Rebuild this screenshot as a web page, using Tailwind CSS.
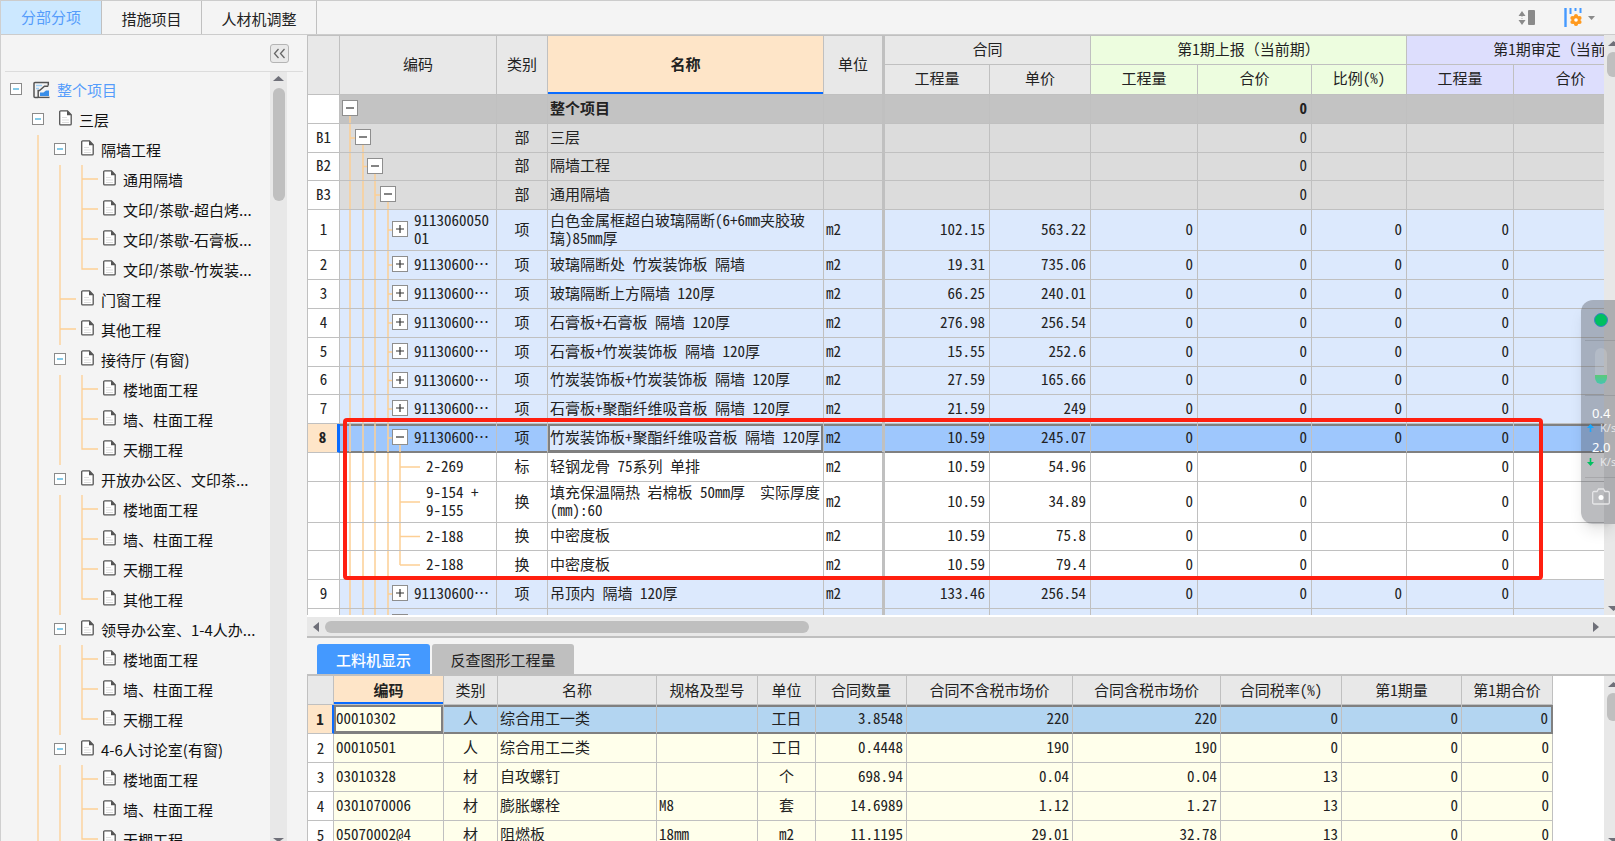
<!DOCTYPE html>
<html lang="zh-CN">
<head>
<meta charset="utf-8">
<title>分部分项</title>
<script src="https://cdn.jsdelivr.net/npm/@tailwindcss/browser@4"></script>
</head>
<body class="h-screen overflow-hidden bg-[#f4f4f4] font-['Noto_Sans_CJK_SC',sans-serif] text-[15px] text-[#222]">
<div class="flex h-full flex-col border-l border-[#cfcfcf]">

  <header class="flex h-[35px] shrink-0 items-stretch border-y border-[#cccccc]">
    <nav class="flex" aria-label="主标签">
      <button class="w-[101px] border-r border-[#c0c0c0] bg-[#cce8ff] text-[#559cfb]">分部分项</button>
      <button class="w-[100px] border-r border-[#c0c0c0] pt-[3px]">措施项目</button>
      <button class="w-[115px] border-r border-[#c0c0c0] pt-[3px]">人材机调整</button>
    </nav>
    <div class="ml-auto flex items-center pr-5">
      <button aria-label="行高" class="mr-7"><svg width="18" height="18" viewBox="0 0 18 18" fill="#8a8a8a"><path d="M4 2l3.500 5H.5zM4 16l3.500-5H.5z"/><path d="M4 7v4" stroke="#aaa" stroke-dasharray="1 1"/><rect x="10" y="1" width="7" height="15" rx="1"/></svg></button>
      <button aria-label="列设置" class="flex items-center gap-1.5"><svg width="18" height="20" viewBox="0 0 18 20"><path d="M1.500 0v19" stroke="#4499ff" stroke-width="2.400"/><path d="M6.500 0v6M11.500 0v3M16.500 0v5" stroke="#4499ff" stroke-width="2"/><g fill="#ff9a1f"><circle cx="12" cy="12" r="4.500"/><circle cx="12" cy="7.800" r="1.900"/><circle cx="12" cy="16.200" r="1.900"/><circle cx="8.300" cy="9.900" r="1.900"/><circle cx="15.700" cy="9.900" r="1.900"/><circle cx="8.300" cy="14.100" r="1.900"/><circle cx="15.700" cy="14.100" r="1.900"/></g><circle cx="12" cy="12" r="1.800" fill="#fff"/></svg><svg width="7" height="4" viewBox="0 0 7 4"><path d="M0 0h7L3.500 4z" fill="#8a8a8a"/></svg></button>
    </div>
  </header>

  <div class="flex min-h-0 flex-1">
    <aside class="flex w-[306px] shrink-0 flex-col">
      <div class="mr-1 ml-1 flex h-[37px] shrink-0 items-center justify-end border-b border-[#dcdcdc] pr-[14px]">
        <button aria-label="收起" class="flex size-[19px] items-center justify-center rounded-[3px] border border-[#b4b4b4] bg-[#e9e9e9]"><svg width="13" height="11" viewBox="0 0 13 11" fill="none" stroke="#666" stroke-width="1.300"><path d="M5.500 1L1.500 5.500l4 4.500M11.500 1l-4 4.500 4 4.500"/></svg></button>
      </div>
      <div class="flex min-h-0 flex-1">
        <ul id="tree" class="w-[269px] shrink-0 overflow-hidden pt-[3px]"></ul>
        <div class="flex w-[17px] flex-col items-center justify-between bg-[#e8e8e8] pt-1">
          <div class="flex flex-col items-center gap-[7px]">
            <svg width="11" height="5" viewBox="0 0 11 5"><path d="M5.500 0L11 5H0z" fill="#6f7079"/></svg>
            <div class="h-[113px] w-3 rounded-full bg-[#bfbfbf]"></div>
          </div>
          <svg width="11" height="3" viewBox="0 0 11 3"><path d="M0 0h11L7 3H4z" fill="#6f7079"/></svg>
        </div>
      </div>
    </aside>

    <main class="flex min-w-0 flex-1 flex-col">
      <section class="flex min-h-0 flex-1">
        <div class="relative min-w-0 flex-1 overflow-hidden bg-white">
          <table class="w-[1416px] table-fixed border-separate border-spacing-0 border-t border-l border-[#c0c0c0] leading-[18px] [font-feature-settings:'hwid']">
            <colgroup><col class="w-[32px]"><col class="w-[157px]"><col class="w-[51px]"><col class="w-[276px]"><col class="w-[61px]"><col class="w-[105px]"><col class="w-[101px]"><col class="w-[107px]"><col class="w-[114px]"><col class="w-[95px]"><col class="w-[107px]"><col class="w-[114px]"><col class="w-[95px]"></colgroup>
            <thead class="[&_th]:border-r [&_th]:border-b [&_th]:border-[#c0c0c0] [&_th]:p-0 [&_th]:pb-[3px] [&_th]:font-normal">
              <tr class="h-[29px] bg-[#e8e8e8]">
                <th rowspan="2"></th><th rowspan="2">编码</th><th rowspan="2">类别</th>
                <th rowspan="2" class="bg-[#fee5c8] shadow-[inset_0_-2px_0_#0a6cff]"><b>名称</b></th>
                <th rowspan="2" class="border-r-[3px]!">单位</th>
                <th colspan="2">合同</th><th colspan="3" class="bg-[#edfddf]">第1期上报<span class="[font-feature-settings:normal]">（</span>当前期<span class="[font-feature-settings:normal]">）</span></th><th colspan="3" class="bg-[#dddefd]">第1期审定<span class="[font-feature-settings:normal]">（</span>当前期<span class="[font-feature-settings:normal]">）</span></th>
              </tr>
              <tr class="h-[30px] bg-[#e8e8e8]">
                <th>工程量</th><th>单价</th>
                <th class="bg-[#edfddf]">工程量</th><th class="bg-[#edfddf]">合价</th><th class="bg-[#edfddf]">比例(%)</th>
                <th class="bg-[#dddefd]">工程量</th><th class="bg-[#dddefd]">合价</th><th class="bg-[#dddefd]"></th>
              </tr>
            </thead>
            <tbody id="bill"></tbody>
          </table>
          <div class="pointer-events-none absolute top-[383px] left-[36px] h-[162px] w-[1200px] rounded-[4px] border-4 border-[#ff1f10]"></div>
        </div>
        <div class="flex w-[11px] shrink-0 flex-col justify-between overflow-hidden bg-[#e8e8e8] pt-1.5 pl-[3px]">
          <div>
            <svg class="ml-px" width="11" height="5" viewBox="0 0 11 5"><path d="M5.500 0L11 5H0z" fill="#6f7079"/></svg>
            <div class="mt-[6px] h-[25px] w-3 rounded-full bg-[#bfbfbf]"></div>
          </div>
          <svg class="mb-1 ml-px shrink-0" width="11" height="5" viewBox="0 0 11 5"><path d="M0 0h11L5.500 5z" fill="#6f7079"/></svg>
        </div>
      </section>

      <div class="flex h-[23px] shrink-0 items-center border-t-2 border-b-2 border-t-white border-b-[#bfbfbf] bg-[#e8e8e8] pr-4 pl-[6px]">
        <svg width="6" height="10" viewBox="0 0 6 10"><path d="M6 0v10L0 5z" fill="#6f7079"/></svg>
        <div class="ml-[6px] h-3 w-[484px] rounded-full bg-[#bfbfbf]"></div>
        <svg class="ml-auto" width="6" height="10" viewBox="0 0 6 10"><path d="M0 0v10l6-5z" fill="#6f7079"/></svg>
      </div>

      <section class="flex h-[203px] shrink-0 flex-col">
        <nav class="flex h-[38px] shrink-0 items-end gap-0.5 border-b-2 border-[#c0c0c0] pl-[10px]" aria-label="明细标签">
          <button class="h-[30px] w-[113px] rounded-t-[3px] bg-[#4499ff] pt-0.5 font-medium text-white">工料机显示</button>
          <button class="h-[30px] w-[142px] rounded-t-[3px] bg-[#bfbfbf] pt-0.5">反查图形工程量</button>
        </nav>
        <div class="flex min-h-0 flex-1">
          <div class="min-w-0 flex-1 overflow-hidden bg-white">
            <table class="w-[1246px] table-fixed border-separate border-spacing-0 border-l border-[#c0c0c0] leading-[18px] [font-feature-settings:'hwid']">
              <colgroup><col class="w-[26px]"><col class="w-[110px]"><col class="w-[54px]"><col class="w-[159px]"><col class="w-[101px]"><col class="w-[58px]"><col class="w-[91px]"><col class="w-[166px]"><col class="w-[148px]"><col class="w-[121px]"><col class="w-[120px]"><col class="w-[91px]"></colgroup>
              <thead class="[&_th]:border-r [&_th]:border-b [&_th]:border-[#c0c0c0] [&_th]:p-0 [&_th]:font-normal">
                <tr class="h-[29px] bg-[#e8e8e8]"><th></th><th class="bg-[#fee5c8] shadow-[inset_0_-2px_0_#0a6cff]"><b>编码</b></th><th>类别</th><th>名称</th><th>规格及型号</th><th>单位</th><th>合同数量</th><th>合同不含税市场价</th><th>合同含税市场价</th><th>合同税率(%)</th><th>第1期量</th><th>第1期合价</th></tr>
              </thead>
              <tbody id="detail"></tbody>
            </table>
          </div>
          <div class="flex w-[11px] shrink-0 flex-col justify-between overflow-hidden bg-[#e8e8e8] pt-1.5 pl-[3px]">
            <div>
              <svg class="ml-px" width="11" height="5" viewBox="0 0 11 5"><path d="M5.500 0L11 5H0z" fill="#6f7079"/></svg>
              <div class="mt-[6px] h-[28px] w-3 rounded-full bg-[#bfbfbf]"></div>
            </div>
            <svg class="ml-px shrink-0" width="11" height="3" viewBox="0 0 11 3"><path d="M0 0h11L7 3H4z" fill="#6f7079"/></svg>
          </div>
        </div>
      </section>
    </main>
  </div>
</div>

<div class="absolute top-[300px] right-0 flex h-[224px] w-[34px] flex-col overflow-hidden rounded-l-xl bg-[#55575f]/40 shadow-lg">
  <div class="ml-[13px] pt-[13px]"><div class="size-[14px] rounded-full border border-[#3b82c4] bg-[#00c060]"></div></div>
  <div class="mt-[13px] ml-1 border-t border-black/10"></div>
  <div class="mt-[7px] ml-[14px] flex h-9 w-3 flex-col justify-end overflow-hidden rounded-full bg-white/15"><div class="h-[9px] bg-linear-to-b from-[#5cc878] to-[#45c5b0]"></div></div>
  <div class="mt-[11px] ml-1 border-t border-black/10"></div>
  <div class="mt-[8px] pl-[11px] font-['Noto_Sans'] text-[13px] leading-[18px] whitespace-nowrap text-white">0.4</div>
  <div class="flex items-center gap-1.5 pl-[6px] font-['Noto_Sans'] text-[11px] leading-[12px] whitespace-nowrap text-white/70"><svg class="shrink-0" width="7" height="8" viewBox="0 0 7 8"><path d="M3.500 0L7 4H4.300v4H2.700V4H0z" fill="#18a8ff"/></svg>K/s</div>
  <div class="mt-[4px] pl-[11px] font-['Noto_Sans'] text-[13px] leading-[18px] whitespace-nowrap text-white">2.0</div>
  <div class="flex items-center gap-1.5 pl-[6px] font-['Noto_Sans'] text-[11px] leading-[12px] whitespace-nowrap text-white/70"><svg class="shrink-0" width="7" height="8" viewBox="0 0 7 8"><path d="M3.500 8L7 4H4.300V0H2.700v4H0z" fill="#00c060"/></svg>K/s</div>
  <div class="mt-[9px] ml-1 border-t border-black/10"></div>
  <svg class="mt-[10px] ml-[11px] shrink-0" width="18" height="17" viewBox="0 0 18 17" fill="none" stroke="#e6e6e8" stroke-width="1.300"><path d="M2 3.500h3l1.500-2.500h5L13 3.500h3a1.300 1.300 0 0 1 1.300 1.300v9.900A1.300 1.300 0 0 1 16 16H2a1.300 1.300 0 0 1-1.300-1.300V4.800A1.300 1.300 0 0 1 2 3.500z"/><circle cx="9" cy="9.500" r="2.500" fill="#fff" stroke="none"/></svg>
</div>

<script>
// Guide codes: '-' expander, 'v' vertical, 't' branch, 'l' last branch, ' ' blank.
const tree = [
  ['-', '整个项目'], [' -', '三层'], [' v-', '隔墙工程'],
  [' vvt', '通用隔墙'], [' vvt', '文印/茶歇-超白烤...'], [' vvt', '文印/茶歇-石膏板...'], [' vvl', '文印/茶歇-竹炭装...'],
  [' vt', '门窗工程'], [' vt', '其他工程'],
  [' v-', '接待厅 (有窗)'], [' vvt', '楼地面工程'], [' vvt', '墙、柱面工程'], [' vvl', '天棚工程'],
  [' v-', '开放办公区、文印茶...'], [' vvt', '楼地面工程'], [' vvt', '墙、柱面工程'], [' vvt', '天棚工程'], [' vvl', '其他工程'],
  [' v-', '领导办公室、1-4人办...'], [' vvt', '楼地面工程'], [' vvt', '墙、柱面工程'], [' vvl', '天棚工程'],
  [' v-', '4-6人讨论室(有窗)'], [' vvt', '楼地面工程'], [' vvt', '墙、柱面工程'], [' vvl', '天棚工程']
];
const guide = { v: 'M11 0V30', t: 'M11 0V30M11 14H27', l: 'M11 0V14H27', ' ': '' };
const cell = c => c === '-'
  ? '<button aria-label="折叠" class="flex h-[30px] w-[22px] items-center justify-center pb-0.5"><svg width="12" height="12" viewBox="0 0 12 12"><rect x=".5" y=".5" width="11" height="11" fill="#fff" stroke="#8a8a8a"/><path d="M3 6h6" stroke="#5bb8e0" stroke-width="1.500"/></svg></button>'
  : '<svg class="overflow-visible" width="22" height="30" viewBox="0 0 22 30" fill="none" stroke="#fdcf94" stroke-width="1.300"><path d="' + guide[c] + '"/></svg>';
const fileIcon = '<svg class="mr-[7px] mb-1 ml-[10px] shrink-0" width="13" height="16" viewBox="0 0 13 16"><path d="M1.700.8h6.800l3.700 3.900v9.200a1 1 0 0 1-1 1H1.700a1 1 0 0 1-1-1V1.800a1 1 0 0 1 1-1z" fill="#fff" stroke="#555" stroke-width="1.300"/><path d="M8 .5v4.700h4.700z" fill="#555"/><path d="M3 7.500h5M3 10h7M3 12.500h7" stroke="#ddd"/></svg>';
const rootIcon = '<svg class="mr-[7px] ml-[6px] shrink-0" width="17" height="18" viewBox="0 0 17 18"><path d="M15.300 4.500V1.500H2a1 1 0 0 0-1 1v13a1 1 0 0 0 1 1h3M15.300 5.200H11.500L6.500 9.500H5.200v7" fill="none" stroke="#555" stroke-width="1.500"/><path d="M3 4.500h6M3 7.500h3" stroke="#9fd0f8" stroke-width="1.500"/><path d="M7 15v-3.500h3.500L13 9.500h3V15z" fill="#3a8ee8"/><path d="M5 16.400h11.500" stroke="#555" stroke-width="1.400"/></svg>';
document.getElementById('tree').innerHTML = tree.map(([g, name], i) =>
  '<li class="flex h-[30px] items-center pl-1 whitespace-nowrap">' + [...g].map(cell).join('') + (i ? fileIcon : rootIcon) +
  '<a href="#" class="' + (i ? 'text-[#111]' : 'text-[#559cfb]') + '">' + name + '</a></li>').join('');

// Columns: number, style, height, depth, toggle, code, category, name, unit, quantity, price, then reported and approved values.
const H29 = 'h-[28px]', H28 = 'h-[27px]', H41 = 'h-[40px]';
const bill = [
  ['', 'root', H29, 0, '-', '', '', '整个项目', '', '', '', '', '0', '', ''],
  ['B1', 'group', H29, 1, '-', '', '部', '三层', '', '', '', '', '0', '', ''],
  ['B2', 'group', H28, 2, '-', '', '部', '隔墙工程', '', '', '', '', '0', '', ''],
  ['B3', 'group', H29, 3, '-', '', '部', '通用隔墙', '', '', '', '', '0', '', ''],
  ['1', 'item', H41, 4, '+', '9113060050<br>01', '项', '白色金属框超白玻璃隔断(6+6mm夹胶玻<br>璃)85mm厚', 'm2', '102.15', '563.22', '0', '0', '0', '0'],
  ['2', 'item', H29, 4, '+', '91130600…', '项', '玻璃隔断处 竹炭装饰板 隔墙', 'm2', '19.31', '735.06', '0', '0', '0', '0'],
  ['3', 'item', H29, 4, '+', '91130600…', '项', '玻璃隔断上方隔墙 120厚', 'm2', '66.25', '240.01', '0', '0', '0', '0'],
  ['4', 'item', H29, 4, '+', '91130600…', '项', '石膏板+石膏板 隔墙 120厚', 'm2', '276.98', '256.54', '0', '0', '0', '0'],
  ['5', 'item', H29, 4, '+', '91130600…', '项', '石膏板+竹炭装饰板 隔墙 120厚', 'm2', '15.55', '252.6', '0', '0', '0', '0'],
  ['6', 'item', H28, 4, '+', '91130600…', '项', '竹炭装饰板+竹炭装饰板 隔墙 120厚', 'm2', '27.59', '165.66', '0', '0', '0', '0'],
  ['7', 'item', H29, 4, '+', '91130600…', '项', '石膏板+聚酯纤维吸音板 隔墙 120厚', 'm2', '21.59', '249', '0', '0', '0', '0'],
  ['8', 'active', H29, 4, '-', '91130600…', '项', '竹炭装饰板+聚酯纤维吸音板 隔墙 120厚', 'm2', '10.59', '245.07', '0', '0', '0', '0'],
  ['', 'sub', H29, 5, 't', '2-269', '标', '轻钢龙骨 75系列 单排', 'm2', '10.59', '54.96', '0', '0', '', '0'],
  ['', 'sub', H41, 5, 't', '9-154 +<br>9-155', '换', '填充保温隔热 岩棉板 50mm厚&nbsp; 实际厚度<br>(mm):60', 'm2', '10.59', '34.89', '0', '0', '', '0'],
  ['', 'sub', H28, 5, 't', '2-188', '换', '中密度板', 'm2', '10.59', '75.8', '0', '0', '', '0'],
  ['', 'sub', H29, 5, 'l', '2-188', '换', '中密度板', 'm2', '10.59', '79.4', '0', '0', '', '0'],
  ['9', 'item', H29, 4, '+', '91130600…', '项', '吊顶内 隔墙 120厚', 'm2', '133.46', '256.54', '0', '0', '0', '0'],
  ['', 'item', H29, 4, '+', '', '', '', '', '', '', '', '', '', '']
];
const rowStyle = { root: 'bg-[#c3c3c3] font-bold', group: 'bg-[#dcdcdc]', item: 'bg-[#dce9fd]', active: 'bg-[#9ec7fd]', sub: 'bg-white' };
const boxPad = ['pl-[2px]', 'pl-[15px]', 'pl-[27px]', 'pl-[40px]', 'pl-[52px]', 'pl-[86px]'];
const guideX = [10, 23, 35, 48, 60];
const line = (x1, y1, x2, y2) => '<line x1="' + x1 + '" y1="' + y1 + '" x2="' + x2 + '" y2="' + y2 + '"/>';
function codeCell(r) {
  const [, , h, depth, toggle, code] = r;
  let s = '';
  for (let i = 0; i < Math.min(depth, 4); i++) s += line(guideX[i], '0', guideX[i], '100%');
  if (depth === 5) s += line(60, '0', 60, toggle === 'l' ? '50%' : '100%') + line(60, '50%', 80, '50%');
  else {
    if (toggle === '-') s += line(guideX[depth], '50%', guideX[depth], '100%');
    if (depth) s += line(guideX[depth - 1], '50%', guideX[depth], '50%');
  }
  const box = depth === 5 ? '' : '<button aria-label="展开或折叠" class="mr-[6px] shrink-0"><svg width="16" height="16" viewBox="0 0 16 16"><rect x=".5" y=".5" width="15" height="15" fill="#fff" stroke="#8e8e8e"/><path d="' + (toggle === '+' ? 'M4 8h8M8 4v8' : 'M4 8h8') + '" stroke="#333" stroke-width="1.200"/></svg></button>';
  return '<div class="grid ' + h + '"><svg class="h-full w-full [grid-area:1/1]" stroke="#fdcf94" stroke-width="1.500">' + s + '</svg>' +
    '<div class="flex items-center pb-0.5 whitespace-nowrap [grid-area:1/1] ' + boxPad[depth] + '">' + box + '<span>' + code + '</span></div></div>';
}
const B = 'border-r border-b border-[#c0c0c0] p-0 ';
const T = B + 'pb-[3px]! ';
const frame = 'border-b-[#808080]! shadow-[inset_0_2px_0_#808080,inset_0_-1px_0_#808080] ';
document.getElementById('bill').innerHTML = bill.map(r => {
  const a = r[1] === 'active' ? frame : '';
  const num = r.slice(9).concat(['', '']);
  return '<tr class="' + rowStyle[r[1]] + '">' +
    '<td class="' + T + (a ? 'border-r-[3px]! border-r-[#0a6cff]! bg-[#fee5c8] font-bold ' : 'bg-white font-normal ') + 'text-center">' + r[0] + '</td>' +
    '<td class="' + B + a + '">' + codeCell(r) + '</td>' +
    '<td class="' + T + a + 'text-center">' + r[6] + '</td>' +
    '<td class="' + T + (a ? 'border-b-[#808080]! bg-[#dce9fd] shadow-[inset_0_0_0_2px_#808080] ' : '') + 'pl-[2px]! whitespace-nowrap">' + r[7] + '</td>' +
    '<td class="' + T + a + 'border-r-[3px]! pl-[2px]!">' + r[8] + '</td>' +
    num.map(n => '<td class="' + T + a + 'pr-[4px]! text-right">' + n + '</td>').join('') + '</tr>';
}).join('');

const detail = [
  ['00010302', '人', '综合用工一类', '', '工日', '3.8548', '220', '220', '0', '0', '0'],
  ['00010501', '人', '综合用工二类', '', '工日', '0.4448', '190', '190', '0', '0', '0'],
  ['03010328', '材', '自攻螺钉', '', '个', '698.94', '0.04', '0.04', '13', '0', '0'],
  ['0301070006', '材', '膨胀螺栓', 'M8', '套', '14.6989', '1.12', '1.27', '13', '0', '0'],
  ['05070002@4', '材', '阻燃板', '18mm', 'm2', '11.1195', '29.01', '32.78', '13', '0', '0']
];
document.getElementById('detail').innerHTML = detail.map((r, i) => {
  const a = i ? '' : frame;
  return '<tr class="h-[29px] ' + (i ? 'bg-[#ffffeb]' : 'bg-[#b3d5f1]') + '">' +
    '<td class="' + B + (i ? 'bg-white ' : 'border-r-2! border-r-[#0a6cff]! bg-[#fee5c8] font-bold ') + 'text-center">' + (i + 1) + '</td>' +
    r.map((v, c) => '<td class="' + T +
      (c === 0 && !i ? 'border-b-[#808080]! bg-[#ffffeb] shadow-[inset_0_0_0_2px_#808080] ' : a) +
      (c === 10 && !i ? 'border-r-2! border-r-[#808080]! ' : '') +
      (c === 1 || c === 4 ? 'text-center' : c > 4 ? 'pr-[3px]! text-right' : 'pl-[2px]!') + '">' + v + '</td>').join('') + '</tr>';
}).join('');
</script>
</body>
</html>
